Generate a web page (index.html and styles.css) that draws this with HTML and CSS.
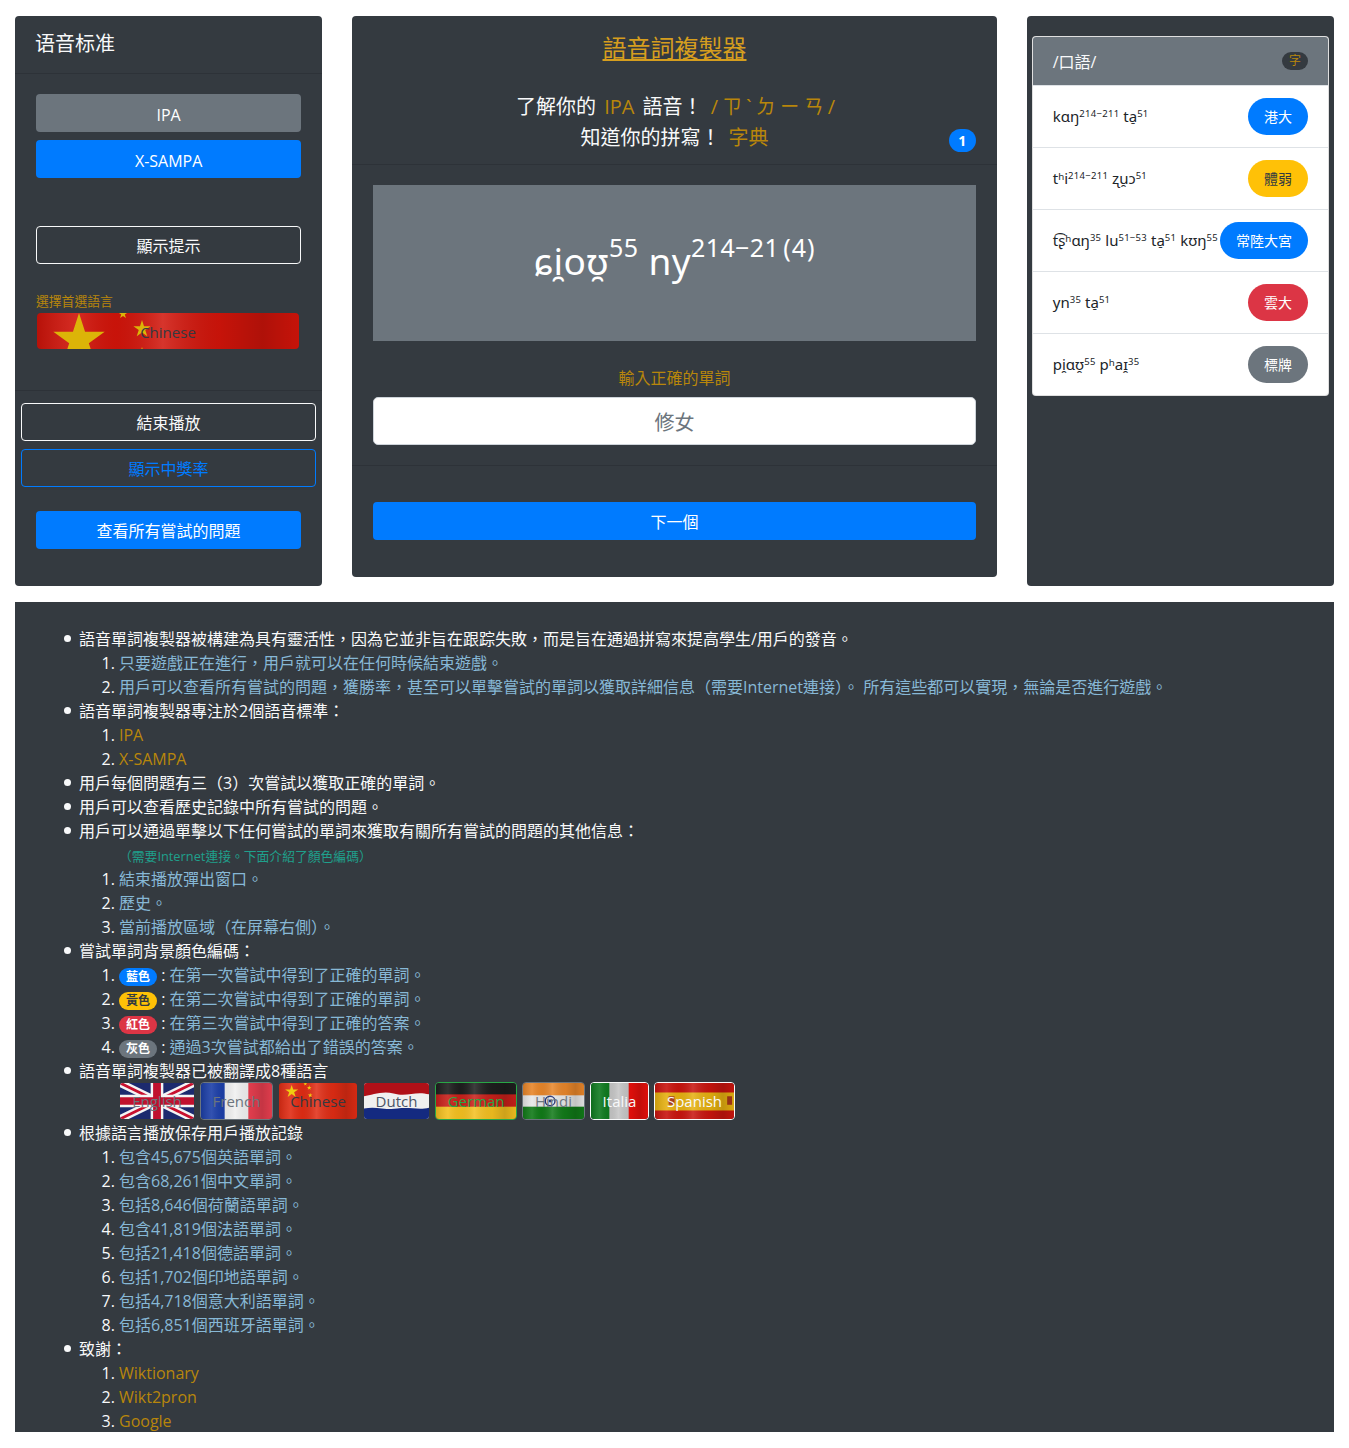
FILE: index.html
```html
<!DOCTYPE html>
<html lang="zh-Hant">
<head>
    <meta charset="UTF-8">
    <meta name="viewport" content="width=device-width, initial-scale=1.0">
    <title>語音詞複製器</title>
    <link rel="stylesheet" href="styles.css">
</head>
<body>
    <!-- shared bits for the flags -->
    <svg class="svg-defs" aria-hidden="true">
        <defs>
            <polygon id="star" points="0,-1 .2245,-.309 .951,-.309 .363,.118 .588,.809 0,.382 -.588,.809 -.363,.118 -.951,-.309 -.2245,-.309"/>
            <linearGradient id="sheen" x1="0" y1="0" x2="1" y2="0">
                <stop offset="0" stop-color="#000" stop-opacity=".12"/>
                <stop offset=".15" stop-color="#fff" stop-opacity=".1"/>
                <stop offset=".3" stop-color="#000" stop-opacity=".04"/>
                <stop offset=".48" stop-color="#fff" stop-opacity=".14"/>
                <stop offset=".7" stop-color="#000" stop-opacity=".05"/>
                <stop offset=".86" stop-color="#000" stop-opacity=".16"/>
                <stop offset="1" stop-color="#000" stop-opacity=".05"/>
            </linearGradient>
        </defs>
    </svg>

    <div class="columns">
        <div class="card card-left">
            <div class="card-head">语音标准</div>
            <div class="left-body">
                <button class="btn btn-gray latin-btn">IPA</button>
                <button class="btn btn-blue latin-btn">X-SAMPA</button>
                <button class="btn btn-light hint-btn">顯示提示</button>
                <div class="small-label">選擇首選語言</div>
                <div class="flag lang-select">
                    <svg viewBox="0 0 262 36" preserveAspectRatio="none">
                        <rect width="262" height="36" fill="#d0140a"/>
                        <rect width="262" height="36" fill="url(#sheen)"/>
                        <use href="#star" transform="translate(42 27) scale(27)" fill="#dcb408"/>
                        <use href="#star" transform="translate(105 16) scale(9)" fill="#dcb408"/>
                        <use href="#star" transform="translate(86 1) scale(5)" fill="#dcb408"/>
                        <use href="#star" transform="translate(105 37) scale(3)" fill="#dcb408"/>
                    </svg>
                    <span class="flag-name text-dark">Chinese</span>
                </div>
            </div>
            <div class="left-foot">
                <button class="btn btn-light">結束播放</button>
                <button class="btn btn-outline-blue">顯示中獎率</button>
                <button class="btn btn-blue all-btn">查看所有嘗試的問題</button>
            </div>
        </div>

        <div class="card card-mid">
            <div class="mid-title"><a href="#">語音詞複製器</a></div>
            <div class="mid-intro">
                <div>了解你的 <span class="gold">IPA</span> 語音！ <span class="gold zhuyin">/ㄗˋㄉㄧㄢ/</span></div>
                <div>知道你的拼寫！ <span class="gold">字典</span></div>
                <span class="count-badge">1</span>
            </div>
            <div class="mid-body">
                <div class="word-box">ɕi̯oʊ̯<sup>55</sup> ny<sup>214−21</sup><sup class="tone">(4)</sup></div>
                <div class="input-label">輸入正確的單詞</div>
                <input class="word-input" type="text" placeholder="修女">
            </div>
            <div class="mid-foot">
                <button class="btn btn-blue">下一個</button>
            </div>
        </div>

        <div class="card card-right">
            <div class="played">
                <div class="played-head">
                    <span class="played-title">/口語/</span>
                    <span class="zi-badge">字</span>
                </div>
                <div class="played-row">
                    <span class="ipa">kɑŋ<sup>214−211</sup> ta̠<sup>51</sup></span>
                    <span class="pill pill-blue">港大</span>
                </div>
                <div class="played-row">
                    <span class="ipa">tʰi<sup>214−211</sup> ʐu̯ɔ<sup>51</sup></span>
                    <span class="pill pill-yellow">體弱</span>
                </div>
                <div class="played-row">
                    <span class="ipa">t͡ʂʰɑŋ<sup>35</sup> lu<sup>51−53</sup> ta̠<sup>51</sup> kʊŋ<sup>55</sup></span>
                    <span class="pill pill-blue">常陸大宮</span>
                </div>
                <div class="played-row">
                    <span class="ipa">yn<sup>35</sup> ta̠<sup>51</sup></span>
                    <span class="pill pill-red">雲大</span>
                </div>
                <div class="played-row">
                    <span class="ipa">pi̯ɑʊ̯<sup>55</sup> pʰaɪ̯<sup>35</sup></span>
                    <span class="pill pill-gray">標牌</span>
                </div>
            </div>
        </div>
    </div>

    <div class="about">
        <ul>
            <li>語音單詞複製器被構建為具有靈活性，因為它並非旨在跟踪失敗，而是旨在通過拼寫來提高學生/用戶的發音。
                <ol class="sub">
                    <li><span class="sky">只要遊戲正在進行，用戶就可以在任何時候結束遊戲。</span></li>
                    <li><span class="sky">用戶可以查看所有嘗試的問題，獲勝率，甚至可以單擊嘗試的單詞以獲取詳細信息（需要Internet連接）。 所有這些都可以實現，無論是否進行遊戲。</span></li>
                </ol>
            </li>
            <li>語音單詞複製器專注於2個語音標準：
                <ol class="sub">
                    <li><a class="gold" href="#">IPA</a></li>
                    <li><a class="gold" href="#">X-SAMPA</a></li>
                </ol>
            </li>
            <li>用戶每個問題有三（3）次嘗試以獲取正確的單詞。</li>
            <li>用戶可以查看歷史記錄中所有嘗試的問題。</li>
            <li>用戶可以通過單擊以下任何嘗試的單詞來獲取有關所有嘗試的問題的其他信息：
                <div class="note">（需要Internet連接。下面介紹了顏色編碼）</div>
                <ol class="sub">
                    <li><span class="sky">結束播放彈出窗口。</span></li>
                    <li><span class="sky">歷史。</span></li>
                    <li><span class="sky">當前播放區域（在屏幕右側）。</span></li>
                </ol>
            </li>
            <li>嘗試單詞背景顏色編碼：
                <ol class="sub">
                    <li><span class="tag pill-blue">藍色</span> : <span class="sky">在第一次嘗試中得到了正確的單詞。</span></li>
                    <li><span class="tag pill-yellow">黃色</span> : <span class="sky">在第二次嘗試中得到了正確的單詞。</span></li>
                    <li><span class="tag pill-red">紅色</span> : <span class="sky">在第三次嘗試中得到了正確的答案。</span></li>
                    <li><span class="tag pill-gray">灰色</span> : <span class="sky">通過3次嘗試都給出了錯誤的答案。</span></li>
                </ol>
            </li>
            <li>語音單詞複製器已被翻譯成8種語言
                <div class="flags">
                    <div class="flag flag-en">
                        <svg viewBox="0 0 76 38" preserveAspectRatio="none">
                            <rect width="76" height="38" fill="#1c2a6e"/>
                            <path d="M0 0L76 38M76 0L0 38" stroke="#f4f4f4" stroke-width="8"/>
                            <path d="M0 0L76 38M76 0L0 38" stroke="#c8102e" stroke-width="3"/>
                            <path d="M38 0V38M0 19H76" stroke="#f4f4f4" stroke-width="13"/>
                            <path d="M38 0V38M0 19H76" stroke="#c0112e" stroke-width="8"/>
                        </svg>
                        <span class="flag-name text-gray">English</span>
                    </div>
                    <div class="flag flag-fr">
                        <svg viewBox="0 0 72 38" preserveAspectRatio="none">
                            <rect width="25" height="38" fill="#1c3fa8"/>
                            <rect x="24" width="25" height="38" fill="#f0f0f0"/>
                            <rect x="48" width="24" height="38" fill="#ea3f50"/>
                            <rect width="72" height="38" fill="url(#sheen)"/>
                        </svg>
                        <span class="flag-name text-gray">French</span>
                    </div>
                    <div class="flag flag-zh">
                        <svg viewBox="0 0 80 38" preserveAspectRatio="none">
                            <rect width="80" height="38" fill="#e02c14"/>
                            <rect width="80" height="38" fill="url(#sheen)"/>
                            <use href="#star" transform="translate(13 9) scale(7)" fill="#f0cc10"/>
                            <use href="#star" transform="translate(31 5) scale(2.5)" fill="#f0cc10"/>
                            <use href="#star" transform="translate(32 13) scale(2.5)" fill="#f0cc10"/>
                            <use href="#star" transform="translate(27 1) scale(2)" fill="#f0cc10"/>
                        </svg>
                        <span class="flag-name text-dark">Chinese</span>
                    </div>
                    <div class="flag flag-nl">
                        <svg viewBox="0 0 66 38" preserveAspectRatio="none">
                            <rect width="66" height="38" fill="#f0f0f0"/>
                            <path d="M0 0H66V12C52 8 44 15 30 11C18 8 8 13 0 14Z" fill="#b01018"/>
                            <path d="M0 27C12 24 22 29 34 27C46 25 56 29 66 26V38H0Z" fill="#142a80"/>
                        </svg>
                        <span class="flag-name text-slate">Dutch</span>
                    </div>
                    <div class="flag flag-de">
                        <svg viewBox="0 0 82 38" preserveAspectRatio="none">
                            <rect width="82" height="13" fill="#1e1e1e"/>
                            <rect y="12" width="82" height="14" fill="#c8201a"/>
                            <rect y="25" width="82" height="13" fill="#f4c020"/>
                            <rect width="82" height="38" fill="url(#sheen)"/>
                        </svg>
                        <span class="flag-name text-green">German</span>
                    </div>
                    <div class="flag flag-hi">
                        <svg viewBox="0 0 63 38" preserveAspectRatio="none">
                            <rect width="63" height="14" fill="#e8862a"/>
                            <rect y="13" width="63" height="13" fill="#e8e8e8"/>
                            <rect y="25" width="63" height="13" fill="#117a18"/>
                            <circle cx="28" cy="19" r="5" fill="none" stroke="#1c2a70" stroke-width="1.5"/>
                            <circle cx="28" cy="19" r="1.5" fill="#1c2a70"/>
                            <rect width="63" height="38" fill="url(#sheen)"/>
                        </svg>
                        <span class="flag-name text-gray">Hindi</span>
                    </div>
                    <div class="flag flag-it">
                        <svg viewBox="0 0 59 38" preserveAspectRatio="none">
                            <rect width="20" height="38" fill="#0f7a20"/>
                            <rect x="19" width="21" height="38" fill="#c4c4c4"/>
                            <rect x="39" width="20" height="38" fill="#e8100c"/>
                            <rect width="59" height="38" fill="url(#sheen)"/>
                        </svg>
                        <span class="flag-name text-white">Italia</span>
                    </div>
                    <div class="flag flag-es">
                        <svg viewBox="0 0 81 38" preserveAspectRatio="none">
                            <rect width="81" height="38" fill="#c8140e"/>
                            <rect y="10" width="81" height="19" fill="#e6b010"/>
                            <rect x="14" y="14" width="6" height="9" fill="#a83818"/>
                            <rect x="74" y="14" width="5" height="9" fill="#a83818"/>
                            <rect width="81" height="38" fill="url(#sheen)"/>
                        </svg>
                        <span class="flag-name text-white">Spanish</span>
                    </div>
                </div>
            </li>
            <li>根據語言播放保存用戶播放記錄
                <ol class="sub">
                    <li><span class="sky">包含45,675個英語單詞。</span></li>
                    <li><span class="sky">包含68,261個中文單詞。</span></li>
                    <li><span class="sky">包括8,646個荷蘭語單詞。</span></li>
                    <li><span class="sky">包含41,819個法語單詞。</span></li>
                    <li><span class="sky">包括21,418個德語單詞。</span></li>
                    <li><span class="sky">包括1,702個印地語單詞。</span></li>
                    <li><span class="sky">包括4,718個意大利語單詞。</span></li>
                    <li><span class="sky">包括6,851個西班牙語單詞。</span></li>
                </ol>
            </li>
            <li>致謝：
                <ol class="sub">
                    <li><a class="gold" href="#">Wiktionary</a></li>
                    <li><a class="gold" href="#">Wikt2pron</a></li>
                    <li><a class="gold" href="#">Google</a></li>
                </ol>
            </li>
        </ul>
    </div>
</body>
</html>
```
FILE: styles.css
```css
* {
    box-sizing: border-box;
}

body {
    margin: 0;
    padding: 16px 0;
    background-color: #fff;
    color: #f8f9fa;
    font-family: "Open Sans", "Noto Sans", "DejaVu Sans", "Noto Sans CJK SC", sans-serif;
    font-size: 16px;
    line-height: 1.5;
}

.svg-defs {
    position: absolute;
    width: 0;
    height: 0;
}

.columns {
    display: grid;
    grid-template-columns: 25% 50% 25%;
}

.card {
    margin: 0 15px;
    background-color: #343a40;
    border-radius: 4px;
}

.card-mid {
    align-self: start;
}

.gold {
    color: #b8860b;
    text-decoration: none;
}

/* buttons */
.btn {
    display: block;
    width: 100%;
    height: 38px;
    padding: 0 12px;
    border: 1px solid transparent;
    border-radius: 4px;
    background: none;
    color: #fff;
    font-family: inherit;
    font-size: 16px;
    text-align: center;
}
.latin-btn {
    padding-top: 3px;
}
.btn-gray {
    background-color: #6c757d;
}
.btn-blue {
    background-color: #007bff;
}
.btn-light {
    border-color: #f8f9fa;
    color: #f8f9fa;
}
.btn-outline-blue {
    border-color: #007bff;
    color: #007bff;
}

/* left column */
.card-head {
    height: 58px;
    padding: 13px 20px 0;
    border-bottom: 1px solid rgba(0, 0, 0, .125);
    font-size: 20px;
    line-height: 30px;
}
.left-body {
    height: 317px;
    padding: 20px 21px;
    border-bottom: 1px solid rgba(0, 0, 0, .125);
}
.left-body .btn {
    margin-bottom: 8px;
}
.left-body .hint-btn {
    margin-top: 48px;
    margin-bottom: 27px;
}
.small-label {
    height: 22px;
    color: #b8860b;
    font-size: 12.8px;
    line-height: 20px;
}
.left-foot {
    padding: 12px 6px 37px;
}
.left-foot .btn {
    margin-bottom: 8px;
}
.left-foot .all-btn {
    width: 265px;
    margin: 24px 15px 0;
}

/* flags */
.flag {
    position: relative;
    display: flex;
    align-items: center;
    justify-content: center;
    height: 38px;
    overflow: hidden;
    border-radius: 4px;
    font-size: 15px;
}
.flag svg {
    position: absolute;
    top: 0;
    left: 0;
    width: 100%;
    height: 100%;
}
.flag-name {
    position: relative;
}
.lang-select {
    width: 262px;
    height: 36px;
    margin-left: 1px;
    padding-top: 2px;
}
.text-dark {
    color: #343a40;
}
.text-slate {
    color: #4c5566;
}
.text-gray {
    color: #6c757d;
}
.text-green {
    color: #28a745;
}
.text-white {
    color: #f8f9fa;
}

/* middle column */
.mid-title {
    height: 62px;
    padding-top: 14px;
    font-size: 24px;
    line-height: 36px;
    text-align: center;
}
.mid-title a {
    color: #d69e1e;
    text-decoration: underline;
}
.mid-intro {
    position: relative;
    height: 87px;
    padding-top: 13px;
    border-bottom: 1px solid rgba(0, 0, 0, .125);
    font-size: 20px;
    line-height: 31px;
    text-align: center;
    word-spacing: 3px;
}
.zhuyin {
    margin-right: -6px;
    letter-spacing: 4px;
}
.count-badge {
    position: absolute;
    top: 51px;
    right: 21px;
    width: 27px;
    height: 23px;
    border-radius: 12px;
    background-color: #007bff;
    color: #fff;
    font-size: 14px;
    font-weight: 700;
    line-height: 23px;
}
.mid-body {
    padding: 20px 21px;
    border-bottom: 1px solid rgba(0, 0, 0, .125);
}
.word-box {
    display: flex;
    align-items: center;
    justify-content: center;
    height: 156px;
    padding-bottom: 4px;
    background-color: #6c757d;
    color: #fff;
    font-family: "Noto Sans", "DejaVu Sans", sans-serif;
    font-size: 37px;
    letter-spacing: .4px;
    white-space: pre;
}
.word-box sup {
    position: relative;
    top: -14px;
    font-size: 25px;
    line-height: 1;
}
.word-box .tone {
    margin-left: 4px;
    letter-spacing: 1px;
}
.input-label {
    margin-top: 25px;
    margin-bottom: 7px;
    color: #b8860b;
    font-size: 16px;
    line-height: 24px;
    text-align: center;
}
.word-input {
    display: block;
    width: 100%;
    height: 48px;
    padding-top: 3px;
    border: 1px solid #ced4da;
    border-radius: 5px;
    background-color: #fff;
    font-family: inherit;
    font-size: 20px;
    text-align: center;
}
.word-input::placeholder {
    color: #6c757d;
    opacity: 1;
}
.mid-foot {
    padding: 36px 21px 37px;
}

/* right column */
.card-right {
    padding: 20px 5px 0;
}
.played {
    overflow: hidden;
    border: 1px solid rgba(0, 0, 0, .125);
    border-radius: 4px;
    background-color: #fff;
}
.played-head {
    display: flex;
    align-items: center;
    justify-content: space-between;
    height: 49px;
    padding: 0 20px;
    border-bottom: 1px solid #dee2e6;
    background-color: #6c757d;
    color: #f8f9fa;
}
.played-title {
    padding-top: 2px;
}
.zi-badge {
    width: 26px;
    height: 18px;
    border-radius: 9px;
    background-color: #343a40;
    color: #b8860b;
    font-size: 12px;
    line-height: 18px;
    text-align: center;
}
.played-row {
    display: flex;
    align-items: center;
    justify-content: space-between;
    height: 62px;
    padding: 0 20px;
    border-bottom: 1px solid #dee2e6;
    color: #212529;
}
.played-row:last-child {
    height: 61px;
    border-bottom: none;
}
.ipa {
    font-family: "Noto Sans", "DejaVu Sans", sans-serif;
    font-size: 15px;
    white-space: nowrap;
}
.ipa sup {
    position: relative;
    top: 1px;
    font-size: 9.5px;
    letter-spacing: .3px;
    line-height: 0;
}
.pill {
    flex-shrink: 0;
    padding: 8px 16px;
    border-radius: 20px;
    font-size: 14px;
    line-height: 21px;
}
.pill-blue {
    background-color: #007bff;
    color: #fff;
}
.pill-yellow {
    background-color: #ffc107;
    color: #343a40;
}
.pill-red {
    background-color: #dc3545;
    color: #fff;
}
.pill-gray {
    background-color: #6c757d;
    color: #fff;
}

/* about panel */
.about {
    height: 830px;
    margin: 16px 15px 0;
    padding-top: 25px;
    background-color: #343a40;
}
.about ul {
    margin: 0;
    padding-left: 64px;
    list-style: none;
}
.about ul > li {
    position: relative;
}
/* bigger bullet than the default marker */
.about ul > li::before {
    content: "";
    position: absolute;
    top: 8px;
    left: -15px;
    width: 7px;
    height: 7px;
    border-radius: 50%;
    background-color: #f8f9fa;
}
.sub {
    margin: 0;
    padding-left: 40px;
}
.sky {
    color: #87b8d6;
}
.note {
    height: 24px;
    padding: 1px 0 0 40px;
    color: #1fa08c;
    font-size: 12.8px;
    line-height: 24px;
}
.tag {
    display: inline-block;
    padding: 0 7px;
    border-radius: 9px;
    font-size: 12px;
    font-weight: 700;
    line-height: 18px;
}
.flags {
    display: flex;
    gap: 5px;
    margin: -1px 0 1px;
    padding: 0 0 0 40px;
}
.flags .flag {
    flex-shrink: 0;
    border: 1px solid transparent;
}
.flag-en {
    width: 76px;
    border-color: #343a40 !important;
}
.flag-fr {
    width: 73px;
    border-color: #6c757d !important;
}
.flag-zh {
    width: 80px;
}
.flag-nl {
    width: 67px;
}
.flag-de {
    width: 82px;
    border-color: #28a745 !important;
}
.flag-hi {
    width: 63px;
    border-color: #6c757d !important;
}
.flag-it {
    width: 59px;
    border-color: #f8f9fa !important;
}
.flag-es {
    width: 81px;
    border-color: #f8f9fa !important;
}
```
